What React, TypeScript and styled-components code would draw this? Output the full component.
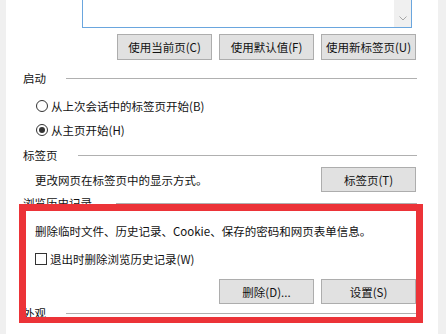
import React from "react";
import styled, { createGlobalStyle } from "styled-components";

const GlobalStyle = createGlobalStyle`
  html, body {
    margin: 0;
    padding: 0;
    background: #f0f0f0;
    overflow: hidden;
  }
  body {
    font-family: "Noto Sans CJK SC", "Noto Sans", sans-serif;
    font-size: 11.5px;
    line-height: 16px;
    color: #111;
  }
`;

const Panel = styled.div`
  position: relative;
  margin-left: 6px;
  width: 432px;
  height: 334px;
  background: #fff;
  box-sizing: border-box;
  padding-right: 22px;
  display: flex;
  flex-direction: column;
  overflow: hidden;
`;

const TextArea = styled.div`
  margin-left: 76px;
  width: 330px;
  height: 28px;
  box-sizing: border-box;
  border: 1px solid #6aa6de;
  border-top: none;
  display: flex;
  justify-content: flex-end;
`;

const ScrollBar = styled.div`
  width: 17px;
  background: #f0f0f0;
  display: flex;
  align-items: flex-end;
  justify-content: center;
  padding-bottom: 6px;
  box-sizing: border-box;
`;

const ButtonRow = styled.div<{ $top: number }>`
  display: flex;
  justify-content: flex-end;
  gap: 7px;
  margin-top: ${(p) => p.$top}px;
`;

const Button = styled.button<{ $h?: number }>`
  width: 95px;
  height: ${(p) => p.$h ?? 26}px;
  box-sizing: border-box;
  background: #e1e1e1;
  border: 1px solid #adadad;
  border-radius: 0;
  padding: 0;
  font-family: inherit;
  font-size: 11.5px;
  line-height: 16px;
  color: #111;
  display: flex;
  align-items: center;
  justify-content: center;
`;

const SectionHeader = styled.div<{ $top: number; $gap?: number }>`
  display: flex;
  align-items: center;
  gap: ${(p) => p.$gap ?? 20}px;
  margin-top: ${(p) => p.$top}px;
  padding-left: 17px;
  height: 16px;
  flex-shrink: 0;
`;

const HeaderLine = styled.div`
  flex: 1;
  height: 1px;
  background: #b0b0b0;
  margin-right: -1px;
`;

const OptionRow = styled.label<{ $top: number; $indent?: number }>`
  display: flex;
  align-items: center;
  gap: 3px;
  margin-top: ${(p) => p.$top}px;
  padding-left: ${(p) => p.$indent ?? 30}px;
  height: 16px;
  flex-shrink: 0;
`;

const Radio = styled.span<{ $checked?: boolean }>`
  width: 12px;
  height: 12px;
  box-sizing: border-box;
  border: 1px solid #333;
  border-radius: 50%;
  background: #fff;
  display: flex;
  align-items: center;
  justify-content: center;
  &::after {
    content: "";
    width: 6px;
    height: 6px;
    border-radius: 50%;
    background: ${(p) => (p.$checked ? "#333" : "transparent")};
  }
`;

const CheckBox = styled.span`
  width: 12px;
  height: 12px;
  box-sizing: border-box;
  border: 1px solid #333;
  background: #fff;
`;

const TextRow = styled.div<{ $top: number }>`
  display: flex;
  align-items: center;
  justify-content: space-between;
  margin-top: ${(p) => p.$top}px;
  padding-left: 29px;
  min-height: 16px;
  flex-shrink: 0;
`;

const Annotation = styled.div`
  position: absolute;
  left: 13px;
  top: 204px;
  width: 404px;
  height: 119px;
  box-sizing: border-box;
  border-style: solid;
  border-color: #ec3338;
  border-width: 7px 7px 6px 7px;
  pointer-events: none;
`;

const Chevron = () => (
  <svg width="8" height="5" viewBox="0 0 8 5">
    <path d="M0.5 0.5 L4 4 L7.5 0.5" fill="none" stroke="#a6a6a6" strokeWidth="1" />
  </svg>
);

export default function App() {
  return (
    <>
      <GlobalStyle />
      <Panel>
        <TextArea>
          <ScrollBar>
            <Chevron />
          </ScrollBar>
        </TextArea>
        <ButtonRow $top={6}>
          <Button>使用当前页(C)</Button>
          <Button>使用默认值(F)</Button>
          <Button>使用新标签页(U)</Button>
        </ButtonRow>

        <SectionHeader $top={10}>
          <span>启动</span>
          <HeaderLine />
        </SectionHeader>
        <OptionRow $top={12}>
          <Radio />
          <span>从上次会话中的标签页开始(B)</span>
        </OptionRow>
        <OptionRow $top={8}>
          <Radio $checked />
          <span>从主页开始(H)</span>
        </OptionRow>

        <SectionHeader $top={9}>
          <span>标签页</span>
          <HeaderLine />
        </SectionHeader>
        <TextRow $top={4}>
          <span>更改网页在标签页中的显示方式。</span>
          <Button $h={25}>标签页(T)</Button>
        </TextRow>

        <SectionHeader $top={3} $gap={24}>
          <span>浏览历史记录</span>
          <HeaderLine />
        </SectionHeader>
        <TextRow $top={12}>
          <span>删除临时文件、历史记录、Cookie、保存的密码和网页表单信息。</span>
        </TextRow>
        <OptionRow $top={12} $indent={29}>
          <CheckBox />
          <span>退出时删除浏览历史记录(W)</span>
        </OptionRow>
        <ButtonRow $top={12}>
          <Button $h={25}>删除(D)...</Button>
          <Button $h={25}>设置(S)</Button>
        </ButtonRow>

        <SectionHeader $top={1}>
          <span>外观</span>
          <HeaderLine />
        </SectionHeader>

        <Annotation />
      </Panel>
    </>
  );
}
